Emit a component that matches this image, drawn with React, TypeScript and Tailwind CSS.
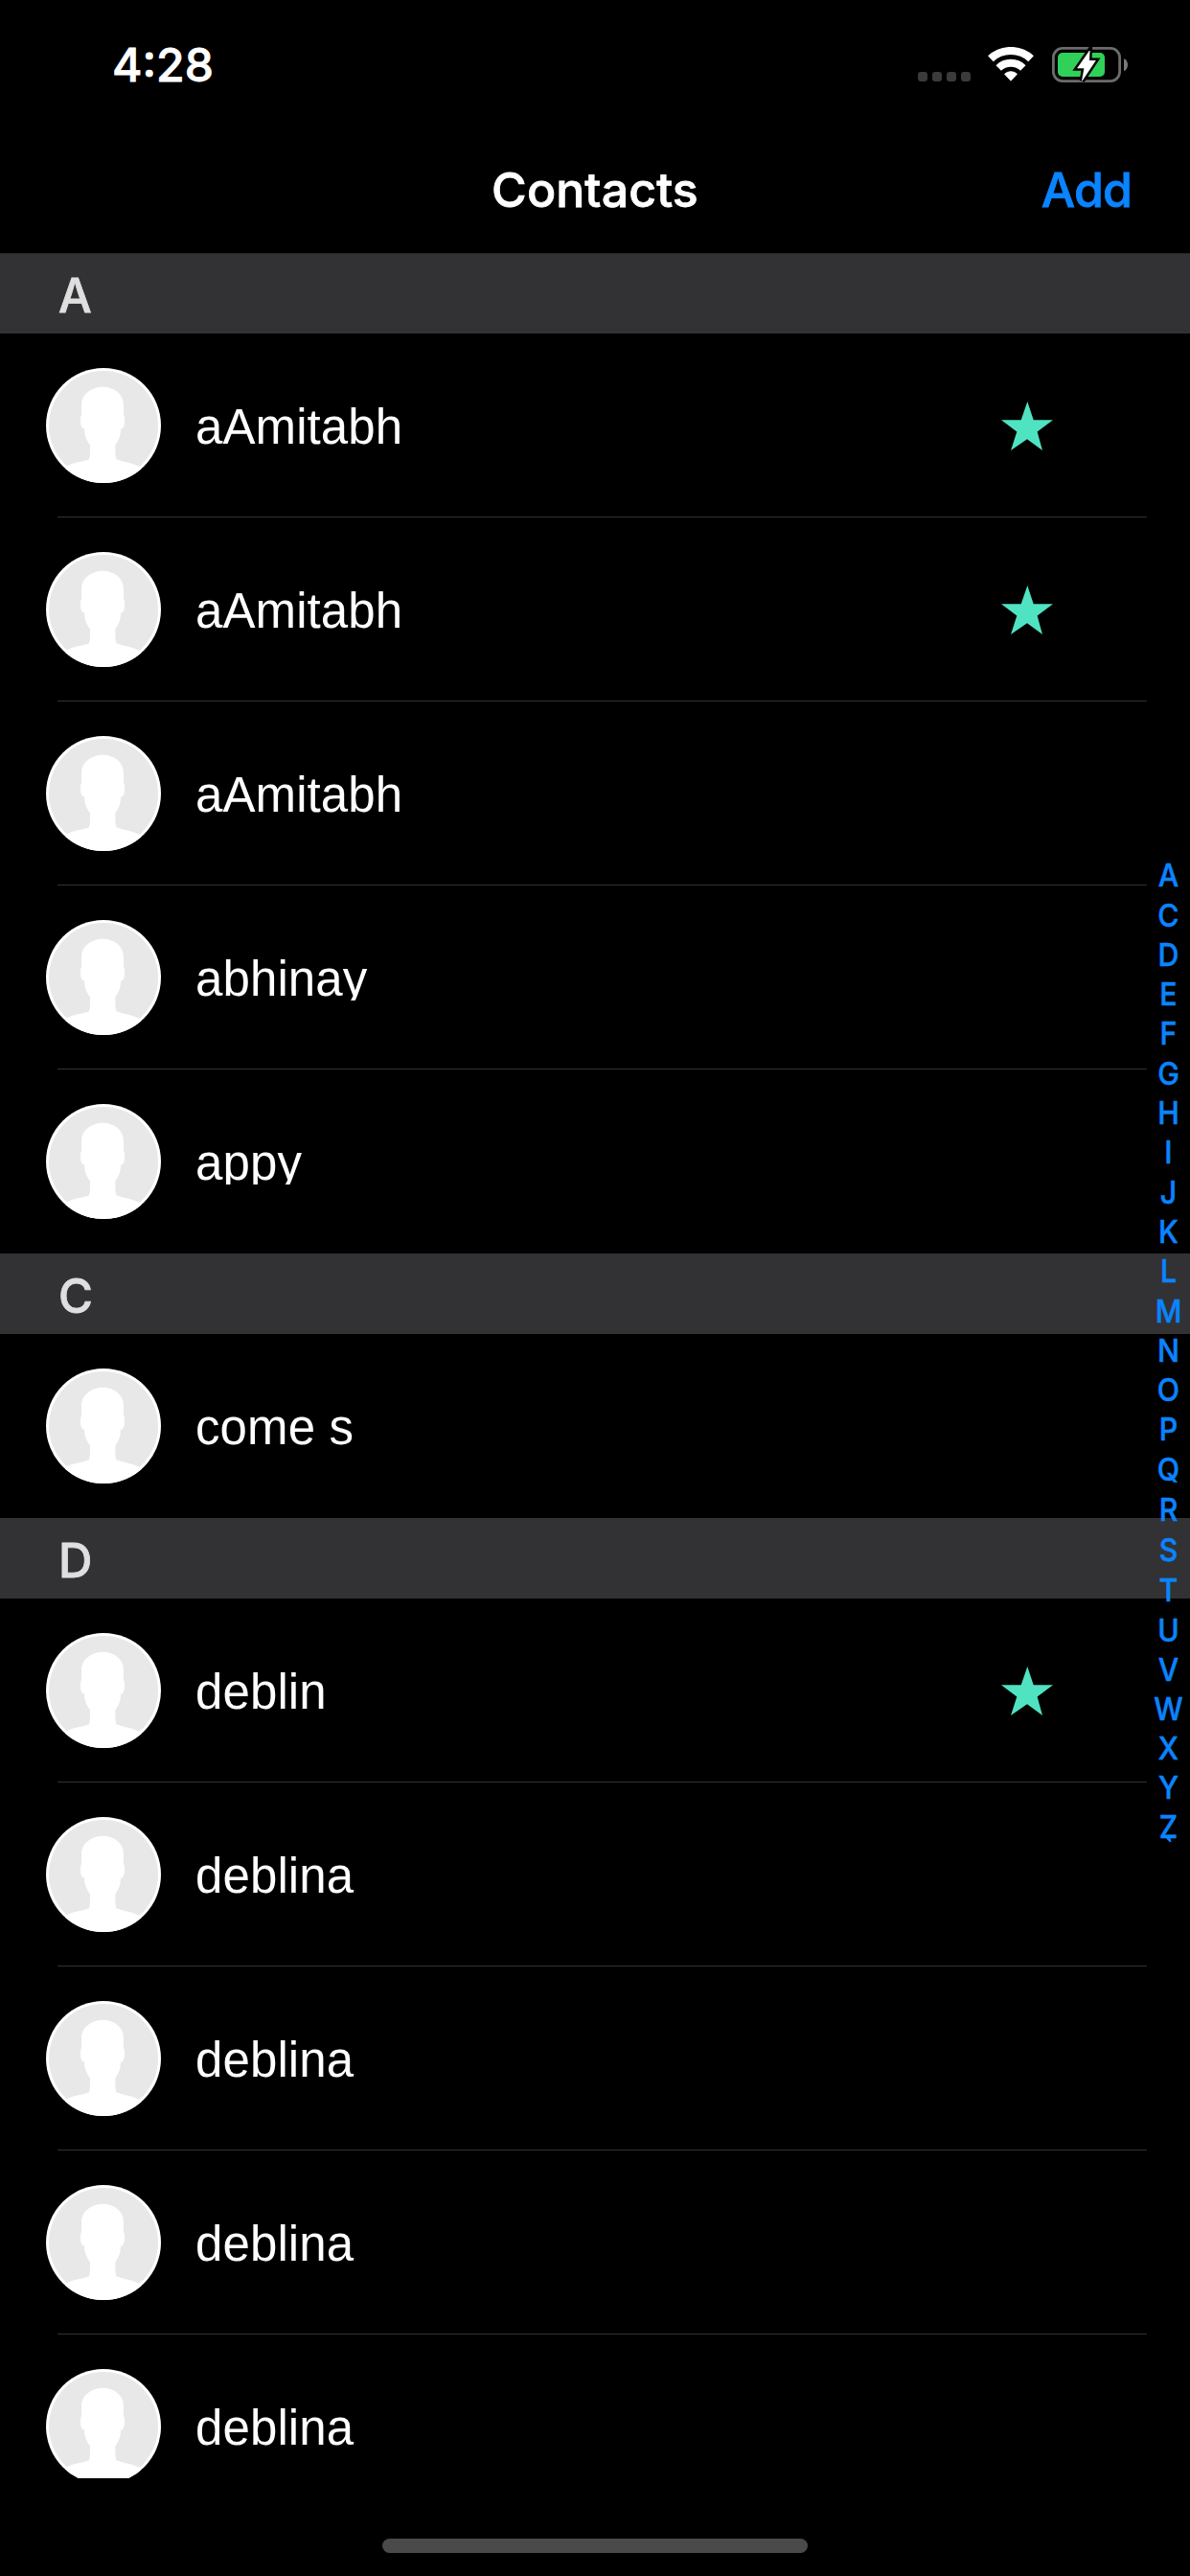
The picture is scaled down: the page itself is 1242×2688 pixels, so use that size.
import React from "react";

type Contact = { name: string; starred?: boolean };
type Section = { letter: string; contacts: Contact[] };

const sections: Section[] = [
  {
    letter: "A",
    contacts: [
      { name: "aAmitabh", starred: true },
      { name: "aAmitabh", starred: true },
      { name: "aAmitabh" },
      { name: "abhinay" },
      { name: "appy" },
    ],
  },
  { letter: "C", contacts: [{ name: "come s" }] },
  {
    letter: "D",
    contacts: [
      { name: "deblin", starred: true },
      { name: "deblina" },
      { name: "deblina" },
      { name: "deblina" },
      { name: "deblina" },
    ],
  },
];

const indexLetters = "ACDEFGHIJKLMNOPQRSTUVWXYZ".split("");

function indexHeight(letter: string) {
  if (letter < "Q") return "h-[41.3px]";
  return letter < "V" ? "h-[42px]" : "h-[41px]";
}

function WifiIcon() {
  return (
    <svg width="48" height="37" viewBox="0 0 48 37" fill="none" stroke="#fff">
      <path d="M2.9 12.3A31 31 0 0 1 45.1 12.3" strokeWidth="8.2" />
      <path d="M11.2 21.95A18.3 18.3 0 0 1 36.8 21.95" strokeWidth="7.8" />
      <path d="M17.6 28.2A9.6 9.6 0 0 1 30.4 28.2L24 35.2Z" fill="#fff" strokeWidth="1" strokeLinejoin="round" />
    </svg>
  );
}

function BatteryIcon() {
  const bolt = "M39.2 4L38.7 14.3H45.4L31.4 35.2L33.7 22H26.6Z";
  return (
    <svg width="80" height="37" viewBox="0 0 80 37" fill="none">
      <rect x="1.4" y="1.4" width="69.2" height="34.2" rx="9.5" stroke="#6b6b6b" strokeWidth="2.8" />
      <path d="M75 12.3C77.6 13.3 79 15.8 79 18.7C79 21.6 77.6 24.2 75 25.3Z" fill="#7a7a7a" />
      <rect x="6" y="6" width="49" height="25" rx="5" fill="#30d158" />
      <path d={bolt} fill="#000" stroke="#000" strokeWidth="5.5" />
      <path d={bolt} fill="#fff" stroke="#fff" strokeWidth="0.6" />
    </svg>
  );
}

function Avatar() {
  return (
    <svg className="mt-9 shrink-0" width="120" height="120" viewBox="0 0 120 120">
      <defs>
        <clipPath id="avatar-circle">
          <circle cx="60" cy="60" r="60" />
        </clipPath>
      </defs>
      <circle cx="60" cy="60" r="60" fill="#fff" />
      <circle cx="60" cy="60" r="57" fill="#e8e8e8" />
      <path
        clipPath="url(#avatar-circle)"
        fill="#fff"
        d="M59.3 19.7C70 19.7 81 26.5 81 38.5V49.3C82 50 82 52 82 55C82 59.5 81.5 63 78 63.7C78 70 76 76 72.3 80.3V87C72.3 90 72.7 93 73.3 95.3C81 98.3 90 99 97 102.7C100 104.5 104 110 104 120H16C16 110 19 103.5 22.7 101.7C29 98.7 38 98 45 95.3C45.6 92 46 90 46 87V80.3C42.5 76 40 70 40 63.7C37 63 36 59.5 36 56C36 53 36 50.5 37 49.3V38.5C37 26.5 49 19.7 59.3 19.7Z"
      />
    </svg>
  );
}

function ContactRow({ contact, divided }: { contact: Contact; divided: boolean }) {
  return (
    <div className="relative flex h-[192px] shrink-0 items-start pl-12 pr-[143px]">
      <Avatar />
      <p className="ml-9 mt-[75px] h-[45px] flex-1 overflow-hidden font-['Liberation_Sans',Arial,sans-serif] text-[51px] leading-[45px] tracking-[0.1px] text-white">
        {contact.name}
      </p>
      {contact.starred && (
        <svg className="mt-[71px]" width="54" height="51" viewBox="0 0 54 51">
          <path
            d="M27.3 0L33.7 19.2H54L37.6 31.5L43 51L27 39.3L10 51L16.3 31.5L0 19.2H20.7Z"
            fill="#50e3c2"
          />
        </svg>
      )}
      {divided && <div className="absolute bottom-0 left-[60px] right-[45px] h-px bg-[#313133]" />}
    </div>
  );
}

export default function App() {
  return (
    <main className="relative flex h-[2688px] w-[1242px] flex-col overflow-hidden bg-black font-['Inter',sans-serif]">
      <header className="shrink-0">
        <div className="flex h-[132px] items-start justify-between pl-[117px] pr-[64px]">
          <span className="mt-[39px] text-[48px] font-medium leading-[58px] text-white [-webkit-text-stroke:0.8px_currentColor]">
            4:28
          </span>
          <div className="mt-[49px] flex items-start">
            <div className="mt-[26px] flex gap-[5px]">
              {[0, 1, 2, 3].map((dot) => (
                <span key={dot} className="size-[10px] rounded-[3px] bg-[#3b3b3b]" />
              ))}
            </div>
            <div className="ml-[18px] mr-[19px]">
              <WifiIcon />
            </div>
            <BatteryIcon />
          </div>
        </div>
        <nav className="grid h-[132px] grid-cols-3 items-center text-[50px] font-medium leading-[60px] [-webkit-text-stroke:0.8px_currentColor]">
          <span />
          <h1 className="text-center tracking-[0.1px] text-white">Contacts</h1>
          <button className="pr-[61px] text-right tracking-[-0.9px] text-[#0a84ff]">Add</button>
        </nav>
      </header>

      <div className="flex h-[2322px] shrink-0 flex-col overflow-hidden">
        {sections.map((section, i) => (
          <section key={section.letter} className="shrink-0">
            <h2
              className={
                "flex h-[84px] items-center bg-[#323234] pl-[61px] pt-1.5 text-[49px] font-medium leading-[60px] text-[#dfdfdf] [-webkit-text-stroke:0.8px_currentColor]" +
                (i === 0 ? " shadow-[inset_0_1px_0_#262628]" : "")
              }
            >
              {section.letter}
            </h2>
            {section.contacts.map((contact, row) => (
              <ContactRow key={row} contact={contact} divided={row < section.contacts.length - 1} />
            ))}
          </section>
        ))}
      </div>

      <aside className="absolute right-0 top-[893px] flex w-[45px] flex-col text-[33px] font-medium leading-[41px] text-[#0a84ff] [-webkit-text-stroke:0.5px_currentColor]">
        {indexLetters.map((letter) => (
          <span key={letter} className={"flex scale-x-[0.92] items-end justify-center " + indexHeight(letter)}>
            {letter}
          </span>
        ))}
        <svg className="absolute bottom-[5px] left-5" width="6" height="4" viewBox="0 0 6 4">
          <path d="M0 0H4.5L5.5 4H3.5Z" fill="#0a84ff" />
        </svg>
      </aside>

      <div className="mt-[63px] h-[15px] w-[444px] shrink-0 self-center rounded-full bg-[#4a4a4a]" />
    </main>
  );
}
